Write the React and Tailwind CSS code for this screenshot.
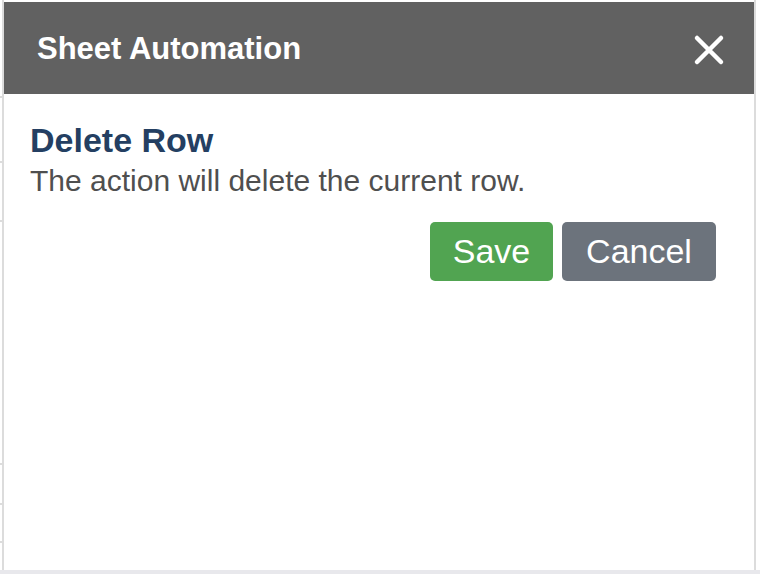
import React from "react";

const ticks = [98, 65, 59, 243, 40, 38];

const CloseIcon = () => (
  <svg width="32" height="32" viewBox="0 0 32 32" fill="none">
    <path
      d="M4 4L28 28M28 4L4 28"
      stroke="white"
      strokeWidth="4.5"
      strokeLinecap="round"
    />
  </svg>
);

const App = () => {
  return (
    <div
      className="flex h-[574px] w-[760px] flex-col bg-white"
      style={{ fontFamily: "'Liberation Sans', Arial, sans-serif" }}
    >
      <div className="flex flex-1">
        {/* sheet grid peeking out behind the dialog */}
        <div className="flex w-[2px] flex-col">
          {ticks.map((h, i) => (
            <div key={i} style={{ height: h }} className="border-b-2 border-[#dcdcdc]" />
          ))}
        </div>
        <div className="w-[2px] bg-[#dcdcdc]" />

        <div className="flex flex-1 flex-col pt-[2px]">
          <div className="flex h-[92px] items-center justify-between bg-[#616161] pl-[33px] pr-[29px] pt-[3px]">
            <h1 className="text-[31px] font-bold text-white">Sheet Automation</h1>
            <button className="flex items-center justify-center">
              <CloseIcon />
            </button>
          </div>

          <div className="flex flex-col pl-[26px] pr-[38px] pt-[26px]">
            <h2 className="text-[34px] font-bold leading-[40px] text-[#243f62]">
              Delete Row
            </h2>
            <p className="mt-[4px] text-[30px] leading-[34px] text-[#4f4f4f]">
              The action will delete the current row.
            </p>
            <div className="mt-[24px] flex justify-end gap-[9px]">
              <button className="h-[59px] w-[123px] rounded-[5px] bg-[#51a451] text-[34px] text-white">
                Save
              </button>
              <button className="h-[59px] w-[154px] rounded-[5px] bg-[#6c737c] text-[34px] text-white">
                Cancel
              </button>
            </div>
          </div>
        </div>

        <div className="w-[2px] bg-[#dcdcdc]" />
        <div className="w-[4px]" />
      </div>
      <div className="h-[4px] bg-[#e8e8ec]" />
    </div>
  );
};

export default App;
